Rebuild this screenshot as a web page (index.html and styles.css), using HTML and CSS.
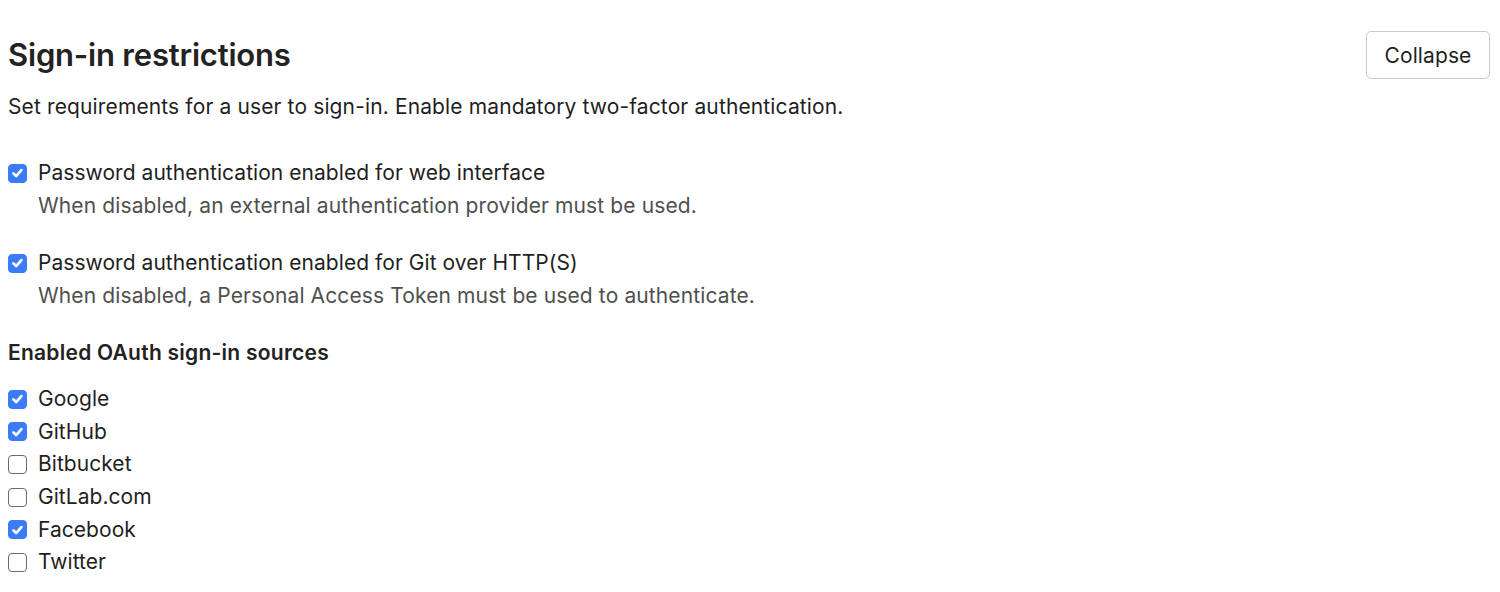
FILE: index.html
```html
<!DOCTYPE html>
<html>
<head>
<meta charset="utf-8">
<link rel="stylesheet" href="styles.css">
</head>
<body>
<section class="settings">
  <div class="header">
    <div class="header-text">
      <h2 class="title">Sign-in restrictions</h2>
      <p class="desc">Set requirements for a user to sign-in. Enable mandatory two-factor authentication.</p>
    </div>
    <button class="btn">Collapse</button>
  </div>

  <div class="option">
    <label class="check-row"><span class="cb on"><svg viewBox="0 0 20 20"><path d="M5.2 10.4l3.2 3.2 6.2-7" /></svg></span>Password authentication enabled for web interface</label>
    <div class="help">When disabled, an external authentication provider must be used.</div>
  </div>

  <div class="option">
    <label class="check-row"><span class="cb on"><svg viewBox="0 0 20 20"><path d="M5.2 10.4l3.2 3.2 6.2-7" /></svg></span>Password authentication enabled for Git over HTTP(S)</label>
    <div class="help">When disabled, a Personal Access Token must be used to authenticate.</div>
  </div>

  <div class="sources">
    <div class="label">Enabled OAuth sign-in sources</div>
    <div class="list">
      <label class="check-row item"><span class="cb on"><svg viewBox="0 0 20 20"><path d="M5.2 10.4l3.2 3.2 6.2-7" /></svg></span>Google</label>
      <label class="check-row item"><span class="cb on"><svg viewBox="0 0 20 20"><path d="M5.2 10.4l3.2 3.2 6.2-7" /></svg></span>GitHub</label>
      <label class="check-row item"><span class="cb"></span>Bitbucket</label>
      <label class="check-row item"><span class="cb"></span>GitLab.com</label>
      <label class="check-row item"><span class="cb on"><svg viewBox="0 0 20 20"><path d="M5.2 10.4l3.2 3.2 6.2-7" /></svg></span>Facebook</label>
      <label class="check-row item"><span class="cb"></span>Twitter</label>
    </div>
  </div>
</section>
</body>
</html>
```

FILE: styles.css
```css
* { box-sizing: border-box; }
body {
  margin: 0;
  background: #fff;
  font-family: Inter, "Noto Sans", sans-serif;
  color: #1f1f1f;
}
.settings {
  padding: 30px 10px 0 8px;
}
.header {
  display: flex;
  justify-content: space-between;
  align-items: flex-start;
}
.title {
  margin: 6px 0 0 0;
  font-size: 31px;
  font-weight: 600;
  line-height: 38px;
  letter-spacing: -0.2px;
  color: #222;
}
.desc {
  margin: 21px 0 0 0;
  font-size: 21px;
  line-height: 24px;
  letter-spacing: 0.13px;
  color: #1f1f1f;
}
.btn {
  width: 124px;
  height: 48px;
  margin-top: 1px;
  background: #fff;
  border: 1px solid #c9c9c9;
  border-radius: 5px;
  font-family: inherit;
  font-size: 21px;
  letter-spacing: 0.1px;
  color: #1f1f1f;
  padding: 0;
}
.option {
  margin-top: 42px;
}
.option + .option {
  margin-top: 33px;
}
.check-row {
  display: flex;
  align-items: center;
  font-size: 21px;
  line-height: 24px;
  letter-spacing: 0.05px;
  color: #1f1f1f;
}
.cb {
  width: 19px;
  height: 19px;
  border: 1.5px solid #6b6b6b;
  border-radius: 4px;
  margin-right: 11px;
  flex: none;
  display: flex;
  align-items: center;
  justify-content: center;
  background: #fff;
}
.cb.on {
  background: #3b7cf6;
  border-color: #3b7cf6;
}
.cb svg {
  width: 18px;
  height: 18px;
  fill: none;
  stroke: #fff;
  stroke-width: 3.2;
  stroke-linecap: round;
  stroke-linejoin: round;
}
.help {
  margin-top: 9px;
  padding-left: 30px;
  font-size: 21px;
  line-height: 24px;
  letter-spacing: 0.12px;
  color: #4f4f4f;
}
.sources {
  margin-top: 33px;
}
.label {
  font-size: 21px;
  font-weight: 600;
  line-height: 24px;
  letter-spacing: 0.25px;
  color: #222;
}
.list {
  margin-top: 22px;
  display: flex;
  flex-direction: column;
  gap: 8.7px;
}
```
